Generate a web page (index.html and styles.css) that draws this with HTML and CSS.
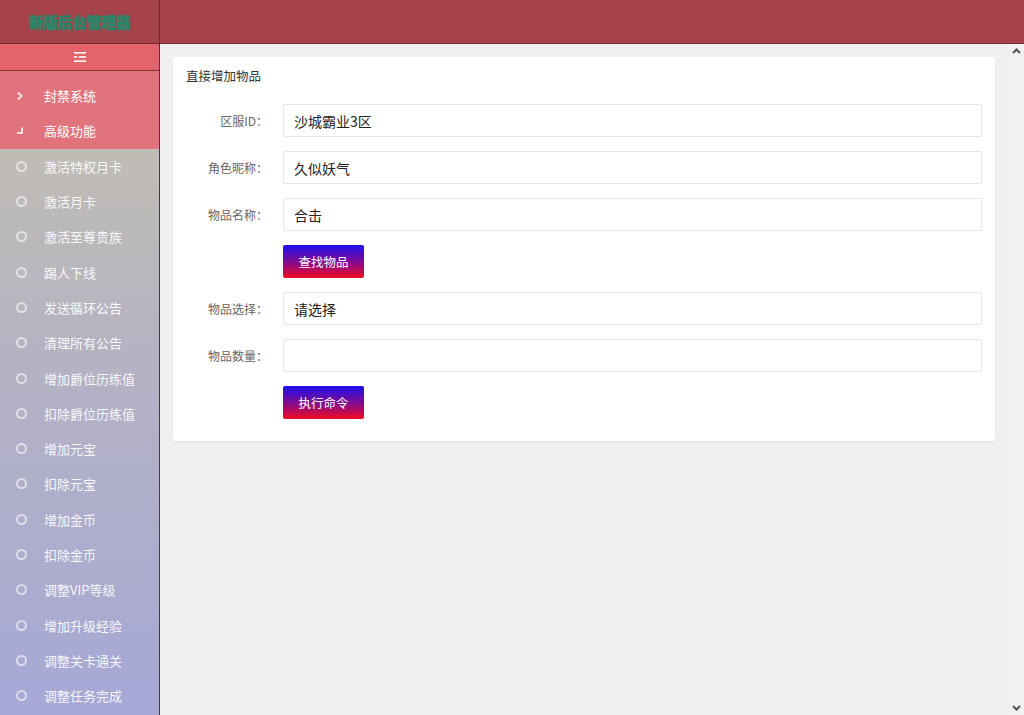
FILE: index.html
```html
<!DOCTYPE html>
<html lang="zh">
<head>
<meta charset="utf-8">
<title>后台管理</title>
<link rel="stylesheet" href="styles.css">
</head>
<body>
<div class="app">
  <header class="topbar">
    <div class="logo">新版后台管理器</div>
    <div class="topbar-rest"></div>
  </header>
  <div class="body">
    <aside class="side">
      <div class="toggle">
        <svg width="12" height="10" viewBox="0 0 12 10"><rect x="0" y="0" width="12" height="1.6" fill="#fff"/><rect x="0" y="4.2" width="12" height="1.6" fill="#fff"/><rect x="0" y="8.4" width="12" height="1.6" fill="#fff"/><rect x="3" y="2" width="1.6" height="6" fill="#e3646a"/></svg>
      </div>
      <nav class="menu">
        <div class="top-items">
          <div class="item"><span class="ico"><svg width="8" height="10" viewBox="0 0 8 10"><path d="M2 1.5 L5.5 5 L2 8.5" fill="none" stroke="#fff" stroke-width="1.6"/></svg></span><span>封禁系统</span></div>
          <div class="item"><span class="ico"><svg width="8" height="8" viewBox="0 0 8 8"><path d="M6 0.5 V6 H1" fill="none" stroke="#fff" stroke-width="1.6"/></svg></span><span>高级功能</span></div>
        </div>
        <div class="sub">
          <div class="item"><span class="ico"><i class="circ"></i></span><span>激活特权月卡</span></div>
          <div class="item"><span class="ico"><i class="circ"></i></span><span>激活月卡</span></div>
          <div class="item"><span class="ico"><i class="circ"></i></span><span>激活至尊贵族</span></div>
          <div class="item"><span class="ico"><i class="circ"></i></span><span>踢人下线</span></div>
          <div class="item"><span class="ico"><i class="circ"></i></span><span>发送循环公告</span></div>
          <div class="item"><span class="ico"><i class="circ"></i></span><span>清理所有公告</span></div>
          <div class="item"><span class="ico"><i class="circ"></i></span><span>增加爵位历练值</span></div>
          <div class="item"><span class="ico"><i class="circ"></i></span><span>扣除爵位历练值</span></div>
          <div class="item"><span class="ico"><i class="circ"></i></span><span>增加元宝</span></div>
          <div class="item"><span class="ico"><i class="circ"></i></span><span>扣除元宝</span></div>
          <div class="item"><span class="ico"><i class="circ"></i></span><span>增加金币</span></div>
          <div class="item"><span class="ico"><i class="circ"></i></span><span>扣除金币</span></div>
          <div class="item"><span class="ico"><i class="circ"></i></span><span>调整VIP等级</span></div>
          <div class="item"><span class="ico"><i class="circ"></i></span><span>增加升级经验</span></div>
          <div class="item"><span class="ico"><i class="circ"></i></span><span>调整关卡通关</span></div>
          <div class="item"><span class="ico"><i class="circ"></i></span><span>调整任务完成</span></div>
        </div>
      </nav>
    </aside>
    <main class="main">
      <section class="card">
        <div class="card-header">直接增加物品</div>
        <div class="card-body">
          <div class="row"><label class="lbl">区服ID：</label><div class="field">沙城霸业3区</div></div>
          <div class="row"><label class="lbl">角色昵称：</label><div class="field">久似妖气</div></div>
          <div class="row"><label class="lbl">物品名称：</label><div class="field">合击</div></div>
          <div class="row"><span class="lbl"></span><button class="btn">查找物品</button></div>
          <div class="row"><label class="lbl">物品选择：</label><div class="field">请选择</div></div>
          <div class="row"><label class="lbl">物品数量：</label><div class="field"></div></div>
          <div class="row"><span class="lbl"></span><button class="btn">执行命令</button></div>
        </div>
      </section>
    </main>
    <div class="scrollbar">
      <svg class="arrow" width="15" height="15" viewBox="0 0 15 15"><path d="M4 9 L7.5 5.5 L11 9" fill="none" stroke="#555" stroke-width="2"/></svg>
      <svg class="arrow" width="15" height="15" viewBox="0 0 15 15"><path d="M4 6 L7.5 9.5 L11 6" fill="none" stroke="#555" stroke-width="2"/></svg>
    </div>
  </div>
</div>
</body>
</html>
```

FILE: styles.css
```css
* { box-sizing: border-box; }
html, body { margin: 0; height: 100%; overflow: hidden; }
body {
  font-family: "Microsoft YaHei", "Noto Sans CJK SC", "Liberation Sans", sans-serif;
  font-size: 13px;
  color: #333;
  background: #f0f0f0;
}
.app { display: flex; flex-direction: column; height: 715px; }
.topbar {
  height: 44px;
  flex: none;
  display: flex;
  background: #a6434a;
  border-bottom: 1px solid #6e2a2f;
}
.logo {
  width: 160px;
  border-right: 1px solid #6e2a2f;
  display: flex;
  align-items: center;
  justify-content: center;
  color: #25886a;
  font-size: 15px;
  font-weight: bold;
  letter-spacing: -0.5px;
  text-shadow: 0 0 3px rgba(37,136,106,0.9);
}
.topbar-rest { flex: 1; }
.body { flex: 1; display: flex; min-height: 0; }
.side {
  width: 160px;
  flex: none;
  border-right: 1px solid #3f3a48;
  display: flex;
  flex-direction: column;
  overflow: hidden;
}
.toggle {
  height: 27px;
  flex: none;
  background: #e3646a;
  border-bottom: 1px solid #8a2f35;
  display: flex;
  align-items: center;
  justify-content: center;
}
.menu { flex: 1; display: flex; flex-direction: column; }
.top-items { background: #e0737b; padding-top: 7px; }
.top-items .item { color: #fff; }
.sub {
  flex: 1;
  background: linear-gradient(to bottom, #c0bcb5 0%, #b4b2c4 40%, #a6a8d6 100%);
}
.item {
  height: 35.3px;
  display: flex;
  align-items: center;
  color: rgba(255,255,255,0.92);
  font-size: 13px;
  white-space: nowrap;
}
.ico {
  width: 44px;
  flex: none;
  display: flex;
  align-items: center;
  justify-content: flex-start;
  padding-left: 16px;
}
.circ {
  display: block;
  width: 11px;
  height: 11px;
  border: 2px solid rgba(255,255,255,0.6);
  border-radius: 50%;
}
.main {
  flex: 1;
  overflow: hidden;
  padding: 13px 14px 0 13px;
  background: #f0f0f0;
}
.scrollbar {
  width: 15px;
  flex: none;
  background: #f1f1f1;
  display: flex;
  flex-direction: column;
  justify-content: space-between;
}
.arrow { display: block; }
.card {
  background: #fff;
  border-radius: 2px;
  box-shadow: 0 1px 2px rgba(0,0,0,0.06);
}
.card-header {
  height: 38px;
  line-height: 38px;
  padding-left: 13px;
  font-size: 12.5px;
  color: #333;
}
.card-body {
  padding: 9px 13px 22px 0;
  display: flex;
  flex-direction: column;
  gap: 14px;
}
.row { display: flex; align-items: center; }
.lbl {
  width: 110px;
  flex: none;
  text-align: right;
  padding-right: 15px;
  color: #666;
  font-size: 12px;
}
.field {
  flex: 1;
  height: 33px;
  border: 1px solid #e6e6e6;
  border-radius: 2px;
  padding-left: 10px;
  display: flex;
  align-items: center;
  color: #222;
  font-size: 14px;
}
.btn {
  width: 81px;
  height: 33px;
  border: none;
  border-radius: 2px;
  background: linear-gradient(to bottom, #1a10ee 0%, #8a0a8a 55%, #f20a1e 100%);
  color: #fff;
  font-family: inherit;
  font-size: 12.5px;
  padding: 0;
}
```
